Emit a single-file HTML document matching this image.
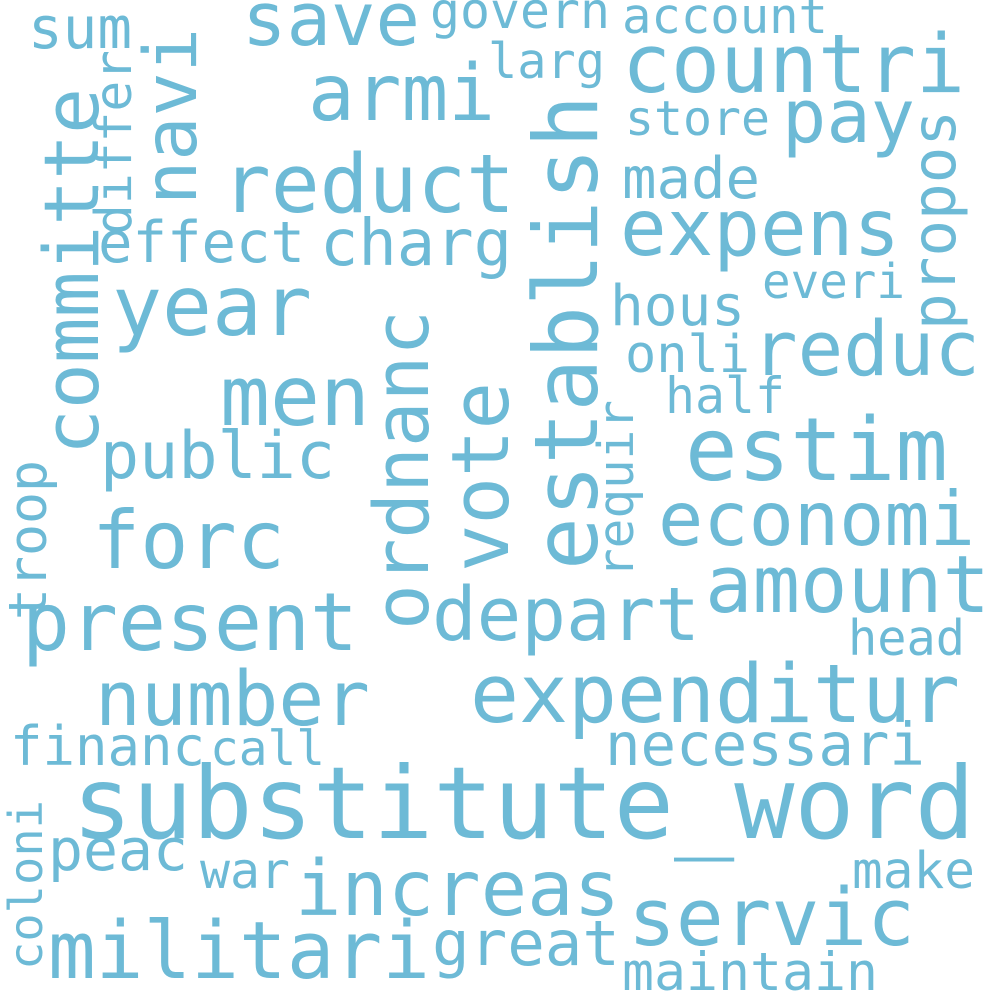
<!DOCTYPE html>
<html><head><meta charset="utf-8"><style>
html,body{margin:0;padding:0;background:#fff;}
svg{display:block}
text{font-family:"DejaVu Sans Mono","Liberation Mono",monospace;fill:#6dbad6;}
</style></head><body>
<svg width="1000" height="1000" viewBox="0 0 1000 1000">
<text x="72" y="838" font-size="100" textLength="903" lengthAdjust="spacingAndGlyphs">substitute_word</text>
<text x="470" y="722" font-size="81" textLength="490" lengthAdjust="spacingAndGlyphs">expenditur</text>
<text x="295" y="915" font-size="77" textLength="325" lengthAdjust="spacingAndGlyphs">increas</text>
<text x="628" y="945" font-size="79" textLength="287" lengthAdjust="spacingAndGlyphs">servic</text>
<text x="48" y="978" font-size="79" textLength="382" lengthAdjust="spacingAndGlyphs">militari</text>
<text x="432" y="965" font-size="62" textLength="188" lengthAdjust="spacingAndGlyphs">great</text>
<text x="622" y="990" font-size="53" textLength="256" lengthAdjust="spacingAndGlyphs">maintain</text>
<text x="48" y="870" font-size="58" textLength="140" lengthAdjust="spacingAndGlyphs">peac</text>
<text x="200" y="888" font-size="50" textLength="90" lengthAdjust="spacingAndGlyphs">war</text>
<text x="852" y="888" font-size="51" textLength="123" lengthAdjust="spacingAndGlyphs">make</text>
<text x="10" y="765" font-size="54" textLength="195" lengthAdjust="spacingAndGlyphs">financ</text>
<text x="210" y="765" font-size="48" textLength="115" lengthAdjust="spacingAndGlyphs">call</text>
<text x="605" y="765" font-size="59" textLength="320" lengthAdjust="spacingAndGlyphs">necessari</text>
<text x="95" y="725" font-size="76" textLength="275" lengthAdjust="spacingAndGlyphs">number</text>
<text x="22" y="650" font-size="80" textLength="336" lengthAdjust="spacingAndGlyphs">present</text>
<text x="432" y="640" font-size="74" textLength="268" lengthAdjust="spacingAndGlyphs">depart</text>
<text x="705" y="612" font-size="79" textLength="285" lengthAdjust="spacingAndGlyphs">amount</text>
<text x="848" y="655" font-size="49" textLength="117" lengthAdjust="spacingAndGlyphs">head</text>
<text x="658" y="545" font-size="75" textLength="317" lengthAdjust="spacingAndGlyphs">economi</text>
<text x="92" y="568" font-size="80" textLength="193" lengthAdjust="spacingAndGlyphs">forc</text>
<text x="100" y="478" font-size="65" textLength="235" lengthAdjust="spacingAndGlyphs">public</text>
<text x="685" y="480" font-size="87" textLength="263" lengthAdjust="spacingAndGlyphs">estim</text>
<text x="220" y="425" font-size="83" textLength="150" lengthAdjust="spacingAndGlyphs">men</text>
<text x="665" y="413" font-size="50" textLength="120" lengthAdjust="spacingAndGlyphs">half</text>
<text x="625" y="372" font-size="52" textLength="125" lengthAdjust="spacingAndGlyphs">onli</text>
<text x="752" y="375" font-size="76" textLength="228" lengthAdjust="spacingAndGlyphs">reduc</text>
<text x="610" y="325" font-size="56" textLength="135" lengthAdjust="spacingAndGlyphs">hous</text>
<text x="762" y="298" font-size="48" textLength="143" lengthAdjust="spacingAndGlyphs">everi</text>
<text x="112" y="335" font-size="83" textLength="200" lengthAdjust="spacingAndGlyphs">year</text>
<text x="98" y="262" font-size="57" textLength="207" lengthAdjust="spacingAndGlyphs">effect</text>
<text x="320" y="265" font-size="64" textLength="192" lengthAdjust="spacingAndGlyphs">charg</text>
<text x="620" y="255" font-size="78" textLength="280" lengthAdjust="spacingAndGlyphs">expens</text>
<text x="622" y="198" font-size="57" textLength="138" lengthAdjust="spacingAndGlyphs">made</text>
<text x="222" y="212" font-size="81" textLength="293" lengthAdjust="spacingAndGlyphs">reduct</text>
<text x="625" y="135" font-size="48" textLength="145" lengthAdjust="spacingAndGlyphs">store</text>
<text x="782" y="142" font-size="74" textLength="133" lengthAdjust="spacingAndGlyphs">pay</text>
<text x="622" y="92" font-size="81" textLength="343" lengthAdjust="spacingAndGlyphs">countri</text>
<text x="308" y="120" font-size="78" textLength="187" lengthAdjust="spacingAndGlyphs">armi</text>
<text x="242" y="45" font-size="74" textLength="178" lengthAdjust="spacingAndGlyphs">save</text>
<text x="28" y="48" font-size="58" textLength="104" lengthAdjust="spacingAndGlyphs">sum</text>
<text x="430" y="28" font-size="50" textLength="180" lengthAdjust="spacingAndGlyphs">govern</text>
<text x="622" y="33" font-size="49" textLength="206" lengthAdjust="spacingAndGlyphs">account</text>
<text x="488" y="78" font-size="49" textLength="117" lengthAdjust="spacingAndGlyphs">larg</text>

<text transform="translate(98,455) rotate(-90)" font-size="76" textLength="367" lengthAdjust="spacingAndGlyphs">committe</text>
<text transform="translate(196,205) rotate(-90)" font-size="73" textLength="177" lengthAdjust="spacingAndGlyphs">navi</text>
<text transform="translate(131,235) rotate(-90)" font-size="51" textLength="185" lengthAdjust="spacingAndGlyphs">differ</text>
<text transform="translate(597,570) rotate(-90)" font-size="88" textLength="475" lengthAdjust="spacingAndGlyphs">establish</text>
<text transform="translate(508,572) rotate(-90)" font-size="79" textLength="190" lengthAdjust="spacingAndGlyphs">vote</text>
<text transform="translate(428,630) rotate(-90)" font-size="76" textLength="320" lengthAdjust="spacingAndGlyphs">ordnanc</text>
<text transform="translate(955,330) rotate(-90)" font-size="61" textLength="220" lengthAdjust="spacingAndGlyphs">propos</text>
<text transform="translate(633,578) rotate(-90)" font-size="49" textLength="178" lengthAdjust="spacingAndGlyphs">requir</text>
<text transform="translate(46,620) rotate(-90)" font-size="53" textLength="160" lengthAdjust="spacingAndGlyphs">troop</text>
<text transform="translate(42,970) rotate(-90)" font-size="46" textLength="170" lengthAdjust="spacingAndGlyphs">coloni</text>
</svg>
</body></html>
